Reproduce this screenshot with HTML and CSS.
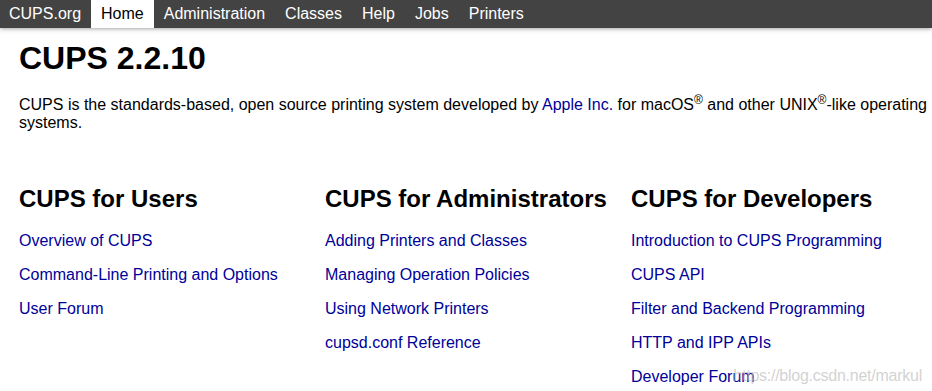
FILE: index.html
```html
<!DOCTYPE html>
<html lang="en">
<head>
  <meta charset="UTF-8" />
  <title>Home - CUPS 2.2.10</title>
  <link rel="stylesheet" href="styles.css">
</head>
<body>

<header class="header">
  <ul>
    <li><a href="#">CUPS.org</a></li>
    <li><a class="active" href="#">Home</a></li>
    <li><a href="#">Administration</a></li>
    <li><a href="#">Classes</a></li>
    <li><a href="#">Help</a></li>
    <li><a href="#">Jobs</a></li>
    <li><a href="#">Printers</a></li>
  </ul>
</header>

<div class="body">
  <h1>CUPS 2.2.10</h1>
  <p class="intro">CUPS is the standards-based, open source printing system developed by <a href="#">Apple Inc.</a> for macOS<sup>&reg;</sup> and other UNIX<sup>&reg;</sup>-like operating systems.</p>

  <div class="row">
    <div class="col">
      <h2>CUPS for Users</h2>
      <p><a href="#">Overview of CUPS</a></p>
      <p><a href="#">Command-Line Printing and Options</a></p>
      <p><a href="#">User Forum</a></p>
    </div>
    <div class="col">
      <h2>CUPS for Administrators</h2>
      <p><a href="#">Adding Printers and Classes</a></p>
      <p><a href="#">Managing Operation Policies</a></p>
      <p><a href="#">Using Network Printers</a></p>
      <p><a href="#">cupsd.conf Reference</a></p>
    </div>
    <div class="col">
      <h2>CUPS for Developers</h2>
      <p><a href="#">Introduction to CUPS Programming</a></p>
      <p><a href="#">CUPS API</a></p>
      <p><a href="#">Filter and Backend Programming</a></p>
      <p><a href="#">HTTP and IPP APIs</a></p>
      <p><a href="#">Developer Forum</a></p>
    </div>
  </div>
</div>

<div class="watermark">https://blog.csdn.net/markul</div>

</body>
</html>
```

FILE: styles.css
```css
body {
  font-family: "Liberation Sans", Arial, sans-serif;
  font-size: 16px;
  background: white;
  color: black;
  margin: 0;
  padding: 0;
  overflow: hidden;
}
a {
  color: #000099;
  text-decoration: none;
}
.header {
  background: #434343;
  box-shadow: 0 0 5px rgba(0,0,0,0.5);
  color: white;
  position: relative;
  z-index: 1;
}
.header ul {
  list-style: none;
  margin: 0;
  padding: 0;
  display: flex;
}
.header a {
  display: block;
  padding: 5px 10px 5px;
  line-height: 18px;
  color: white;
}
.header li:first-child a {
  padding-left: 9px;
}
.header a.active {
  background: white;
  color: black;
}
.body {
  padding: 0 0 0 19px;
}
h1 {
  font-size: 32px;
  line-height: 37px;
  margin: 12px 0 0;
}
p {
  line-height: 18px;
  margin: 16px 0 0;
}
.intro {
  margin-top: 19px;
}
sup {
  font-size: 12px;
  line-height: 0;
}
.row {
  display: grid;
  grid-template-columns: repeat(3, 306px);
  margin-top: 53px;
}
h2 {
  font-size: 24px;
  line-height: 28px;
  margin: 0 0 19px;
}
.col h2 + p {
  margin-top: 0;
}
.watermark {
  position: absolute;
  right: 10px;
  top: 367px;
  font-size: 16px;
  letter-spacing: -0.25px;
  color: rgba(190,190,190,0.7);
}
```
